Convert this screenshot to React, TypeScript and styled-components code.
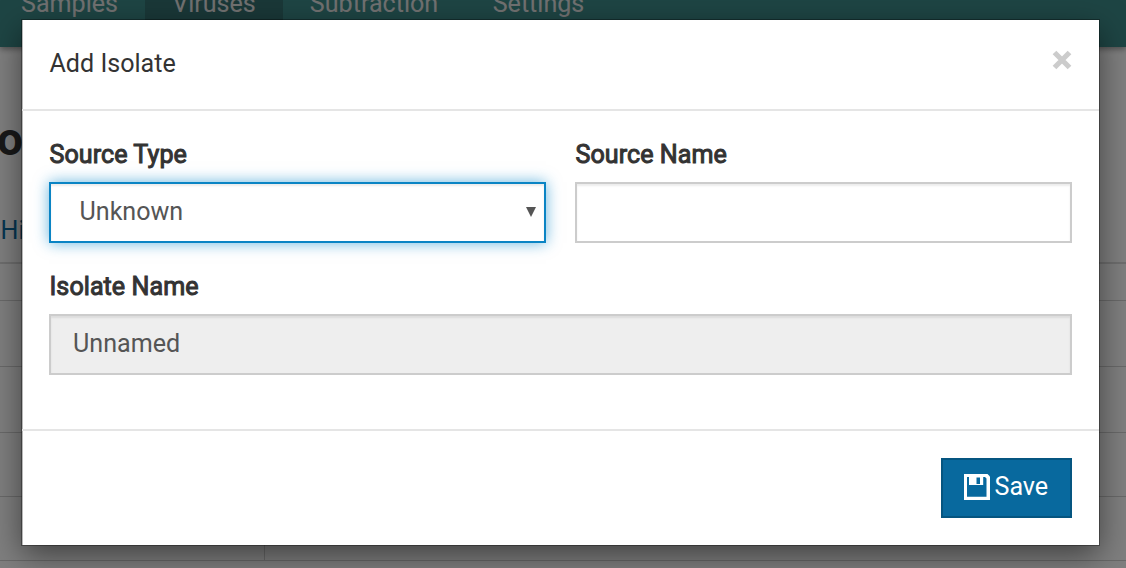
import React from "react";
import styled, { createGlobalStyle } from "styled-components";

const GlobalStyle = createGlobalStyle`
  *, *::before, *::after { box-sizing: border-box; }
  html, body { margin: 0; padding: 0; overflow: hidden; background: #fff; }
  body { font-family: Roboto, "Liberation Sans", sans-serif; font-size: 25.1px; line-height: 38px; color: #333; }
`;

const Page = styled.div`
  position: relative;
  height: 568px;
  overflow: hidden;
`;

const Navbar = styled.nav`
  display: flex;
  height: 47px;
  background: #3d8a88;
  box-shadow: 0 2px 6px rgba(0, 0, 0, 0.4);
`;

const NavItem = styled.a<{ $active?: boolean; $width: number }>`
  display: flex;
  flex: none;
  justify-content: center;
  width: ${(p) => p.$width}px;
  height: 47px;
  line-height: 8px;
  color: #e3e3e3;
  background: ${(p) => (p.$active ? "#357070" : "transparent")};
`;

const PageTitle = styled.h1`
  margin: 0;
  padding-top: 62px;
  height: 152px;
  font-size: 46px;
  line-height: 60px;
  font-weight: 700;
  text-indent: -3px;
`;

const Tabs = styled.div`
  height: 65px;
  padding-top: 13px;
  border-bottom: 2px solid #ddd;
  color: #0a6ca5;
  text-indent: 0.5px;
`;

const Table = styled.div`
  display: flex;
  flex-direction: column;
  padding-top: 36px;
`;

const TableRow = styled.div<{ $height: number }>`
  height: ${(p) => p.$height}px;
  border-top: 1px solid #d2d2d2;
`;

const TableLabel = styled.div`
  width: 265px;
  height: 100%;
  border-right: 1px solid #d2d2d2;
`;

const Backdrop = styled.div`
  position: absolute;
  inset: 0;
  padding: 20px 27px 0 22px;
  background: rgba(0, 0, 0, 0.5);
`;

const Dialog = styled.section`
  display: flex;
  flex-direction: column;
  width: 1077px;
  height: 525px;
  background: #fff;
  box-shadow: inset 1px 0 0 #b8b8b8, 0 0 0 1px rgba(0, 0, 0, 0.32), 0 10px 30px rgba(0, 0, 0, 0.5);
`;

const DialogHeader = styled.header`
  display: flex;
  justify-content: space-between;
  height: 91px;
  padding: 25px 26px 0 27.5px;
  border-bottom: 2px solid #e5e5e5;
`;

const CloseButton = styled.button`
  display: flex;
  width: 22px;
  height: 30px;
  padding: 0;
  border: 0;
  background: none;
  align-items: center;
`;

const DialogBody = styled.div`
  display: grid;
  grid-template-columns: 497px 497px;
  grid-template-rows: 132px 132px;
  column-gap: 29px;
  height: 318px;
  padding: 25px 27px 0;
`;

const Field = styled.div<{ $wide?: boolean }>`
  grid-column: ${(p) => (p.$wide ? "1 / -1" : "auto")};
`;

const Label = styled.label`
  display: block;
  height: 46px;
  padding-left: 0.5px;
  letter-spacing: 0.05px;
  -webkit-text-stroke: 1px #333;
`;

const Control = styled.div<{ $focused?: boolean; $disabled?: boolean }>`
  display: flex;
  justify-content: space-between;
  height: 61px;
  padding: 9px 8px 0 ${(p) => (p.$focused ? 28.5 : 22)}px;
  color: #555;
  background: ${(p) => (p.$disabled ? "#eee" : "#fff")};
  border: 2px solid ${(p) => (p.$focused ? "#0a84c4" : "#ccc")};
  box-shadow: inset 0 2px 2px rgba(0, 0, 0, 0.075)
    ${(p) => (p.$focused ? ", 0 0 14px rgba(0, 132, 200, 0.6)" : "")};
`;

const Arrow = styled.svg`
  margin-top: 14px;
`;

const DialogFooter = styled.footer`
  display: flex;
  justify-content: flex-end;
  height: 116px;
  padding: 27px 27px 0;
  border-top: 2px solid #e5e5e5;
`;

const SaveButton = styled.button`
  display: flex;
  width: 131px;
  height: 60px;
  padding: 8px 0 0 21px;
  gap: 4.5px;
  font: inherit;
  color: #fff;
  background: #08699e;
  border: 2px solid #055580;
`;

const SaveIcon = styled.svg`
  flex: none;
  margin-top: 6px;
`;

export default function App() {
  return (
    <Page>
      <GlobalStyle />
      <Navbar>
        <NavItem $width={139}>Samples</NavItem>
        <NavItem $width={6} />
        <NavItem $width={138} $active>Viruses</NavItem>
        <NavItem $width={182}>Subtraction</NavItem>
        <NavItem $width={147}>Settings</NavItem>
      </Navbar>
      <PageTitle>o</PageTitle>
      <Tabs>Hi</Tabs>
      <Table>
        <TableRow $height={66} />
        <TableRow $height={66} />
        <TableRow $height={64} />
        <TableRow $height={64}><TableLabel /></TableRow>
        <TableRow $height={8} />
      </Table>
      <Backdrop>
        <Dialog role="dialog" aria-label="Add Isolate">
          <DialogHeader>
            <span>Add Isolate</span>
            <CloseButton aria-label="Close">
              <svg width="22" height="22" viewBox="0 0 22 22">
                <path d="M3.500 3.500 18.500 18.500M18.500 3.500 3.500 18.500" stroke="#ccc" strokeWidth="5.200" fill="none" />
              </svg>
            </CloseButton>
          </DialogHeader>
          <DialogBody>
            <Field>
              <Label>Source Type</Label>
              <Control $focused>
                Unknown
                <Arrow width="10" height="10" viewBox="0 0 10 10">
                  <path d="M0 0H10L5 10Z" fill="#555" />
                </Arrow>
              </Control>
            </Field>
            <Field>
              <Label>Source Name</Label>
              <Control />
            </Field>
            <Field $wide>
              <Label>Isolate Name</Label>
              <Control $disabled>Unnamed</Control>
            </Field>
          </DialogBody>
          <DialogFooter>
            <SaveButton>
              <SaveIcon width="26" height="26" viewBox="0 0 26 26">
                <path fill="#fff" d="M0 0H23.500L26 2.500V26H0Z" />
                <path fill="#08699e" d="M3 3H5V11H19.200V3H21L22.500 4.500V22.700H3Z" />
                <path fill="#08699e" d="M12.500 3.500H16V10H12.500Z" />
              </SaveIcon>
              Save
            </SaveButton>
          </DialogFooter>
        </Dialog>
      </Backdrop>
    </Page>
  );
}
